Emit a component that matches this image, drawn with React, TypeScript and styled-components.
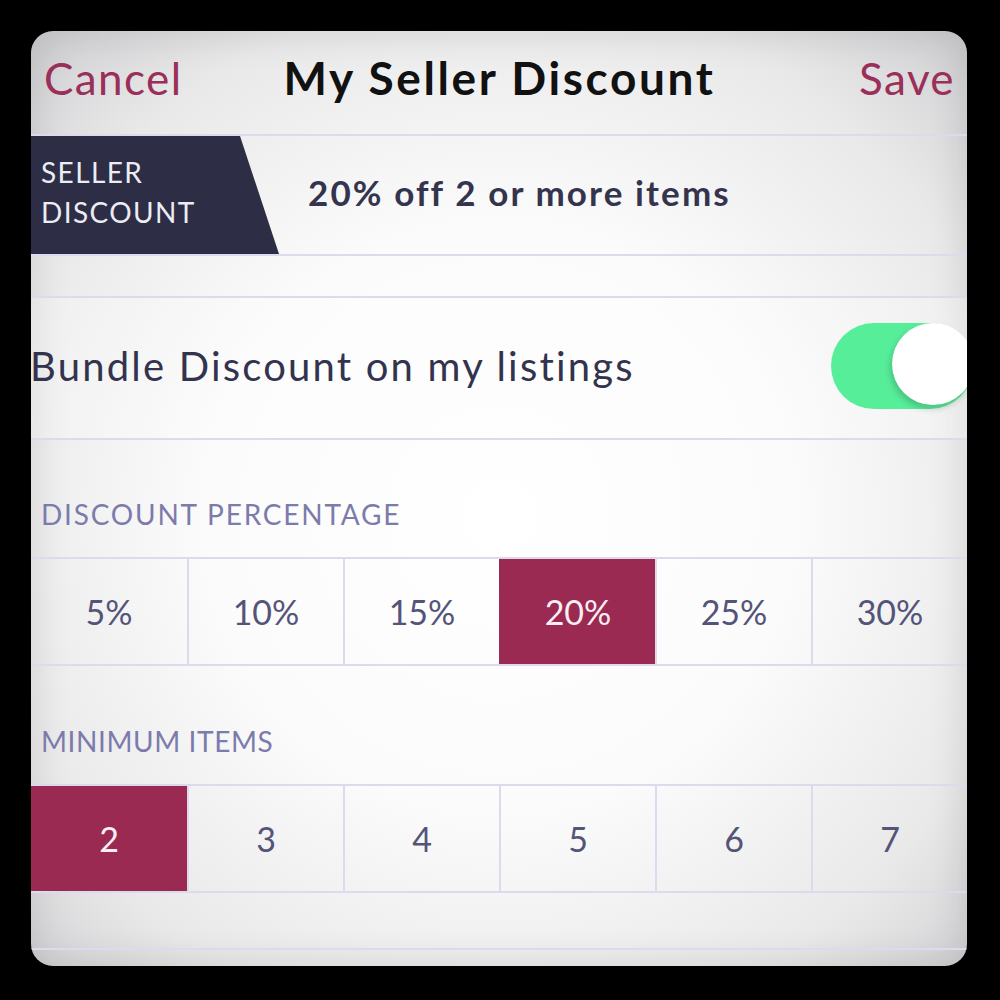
import React, { useState } from 'react';
import styled, { createGlobalStyle } from 'styled-components';

const GlobalStyle = createGlobalStyle`
  html, body {
    margin: 0;
    padding: 0;
    background: #000;
  }
  body {
    font-family: Lato, "Open Sans", sans-serif;
  }
`;

const Frame = styled.div`
  width: 1000px;
  height: 1000px;
  padding: 31px 33px 34px 31px;
  box-sizing: border-box;
  background: #000;
`;

const Screen = styled.div`
  width: 100%;
  height: 100%;
  border-radius: 22px;
  overflow: hidden;
  display: flex;
  flex-direction: column;
  background: radial-gradient(ellipse 70% 70% at 50% 52%, #ffffff 0%, #fbfbfc 45%, #e9e9ea 80%, #d2d2d4 100%);
  box-shadow: inset 0 0 40px rgba(0, 0, 0, 0.12);
`;

const line = '#dddaee';

const NavBar = styled.div`
  height: 105px;
  flex: none;
  display: grid;
  grid-template-columns: 1fr auto 1fr;
  align-items: center;
  padding: 0 12px 10px 13px;
  box-sizing: border-box;
  border-bottom: 2px solid ${line};
`;

const NavButton = styled.button<{ $end?: boolean }>`
  justify-self: ${(p) => (p.$end ? 'end' : 'start')};
  border: none;
  background: none;
  padding: 0;
  font-family: inherit;
  font-size: 44px;
  letter-spacing: 1.4px;
  color: #9a2f59;
  cursor: pointer;
`;

const Title = styled.div`
  font-size: 46px;
  font-weight: 700;
  color: #111;
  letter-spacing: 2.6px;
`;

const Banner = styled.div`
  height: 118px;
  flex: none;
  display: flex;
  align-items: stretch;
  border-bottom: 2px solid ${line};
`;

const Tag = styled.div`
  width: 248px;
  flex: none;
  background: #2d2e45;
  clip-path: polygon(0 0, 209px 0, 100% 100%, 0 100%);
  color: #ececf4;
  font-size: 28px;
  letter-spacing: 1.4px;
  line-height: 40px;
  padding: 16px 0 0 10px;
  box-sizing: border-box;
`;

const BannerText = styled.div`
  align-self: center;
  margin-left: 29px;
  margin-top: -6px;
  font-size: 35px;
  font-weight: 700;
  color: #34344e;
  letter-spacing: 2.1px;
`;

const Spacer = styled.div<{ $h: number; $line?: boolean }>`
  height: ${(p) => p.$h}px;
  flex: none;
  border-bottom: ${(p) => (p.$line ? `2px solid ${line}` : 'none')};
`;

const ToggleRow = styled.div`
  height: 140px;
  flex: none;
  display: flex;
  align-items: center;
  justify-content: space-between;
  border-bottom: 2px solid ${line};
  background: rgba(255, 255, 255, 0.25);
`;

const RowText = styled.div`
  margin-left: -1px;
  margin-top: -4px;
  font-size: 40px;
  color: #33334d;
  letter-spacing: 2.2px;
`;

const Switch = styled.button<{ $on: boolean }>`
  position: relative;
  width: 142px;
  height: 86px;
  flex: none;
  margin-right: -6px;
  margin-top: -4px;
  border: none;
  padding: 0;
  border-radius: 43px;
  background: ${(p) => (p.$on ? '#57ee9a' : '#e6e6e6')};
  cursor: pointer;
`;

const Knob = styled.span<{ $on: boolean }>`
  position: absolute;
  top: 0;
  left: ${(p) => (p.$on ? '61px' : '2px')};
  width: 82px;
  height: 82px;
  border-radius: 50%;
  background: #fff;
  box-shadow: -2px 4px 6px rgba(0, 0, 0, 0.18);
`;

const SectionLabel = styled.div<{ $h: number }>`
  height: ${(p) => p.$h}px;
  flex: none;
  display: flex;
  align-items: flex-end;
  padding: 0 0 26px 10px;
  box-sizing: border-box;
  font-size: 28px;
  color: #7c7bab;
  letter-spacing: ${(p) => (p.$h > 117 ? '0.6px' : '1.8px')};
`;

const Segmented = styled.div`
  height: 109px;
  flex: none;
  display: grid;
  grid-template-columns: repeat(6, 1fr);
  border-top: 2px solid ${line};
  border-bottom: 2px solid ${line};
  box-sizing: border-box;
`;

const Segment = styled.button<{ $active: boolean }>`
  border: none;
  border-left: 2px solid ${(p) => (p.$active ? '#9a2a51' : line)};
  &:first-child {
    border-left: none;
  }
  padding: 0;
  background: ${(p) => (p.$active ? '#9a2a51' : 'transparent')};
  color: ${(p) => (p.$active ? '#fbeef3' : '#545479')};
  font-family: inherit;
  font-size: 34px;
  cursor: pointer;
`;

const percents = [5, 10, 15, 20, 25, 30];
const counts = [2, 3, 4, 5, 6, 7];

export default function App() {
  const [on, setOn] = useState(true);
  const [pct, setPct] = useState(20);
  const [min, setMin] = useState(2);

  return (
    <>
      <GlobalStyle />
      <Frame>
        <Screen>
          <NavBar>
            <NavButton>Cancel</NavButton>
            <Title>My Seller Discount</Title>
            <NavButton $end>Save</NavButton>
          </NavBar>

          <Banner>
            <Tag>
              SELLER
              <br />
              DISCOUNT
            </Tag>
            <BannerText>{pct}% off {min} or more items</BannerText>
          </Banner>

          <Spacer $h={40} $line />

          <ToggleRow>
            <RowText>Bundle Discount on my listings</RowText>
            <Switch $on={on} onClick={() => setOn(!on)}>
              <Knob $on={on} />
            </Switch>
          </ToggleRow>

          <SectionLabel $h={117}>DISCOUNT PERCENTAGE</SectionLabel>
          <Segmented>
            {percents.map((p) => (
              <Segment key={p} $active={p === pct} onClick={() => setPct(p)}>
                {p}%
              </Segment>
            ))}
          </Segmented>

          <SectionLabel $h={118}>MINIMUM ITEMS</SectionLabel>
          <Segmented>
            {counts.map((c) => (
              <Segment key={c} $active={c === min} onClick={() => setMin(c)}>
                {c}
              </Segment>
            ))}
          </Segmented>

          <Spacer $h={55} $line />
        </Screen>
      </Frame>
    </>
  );
}
